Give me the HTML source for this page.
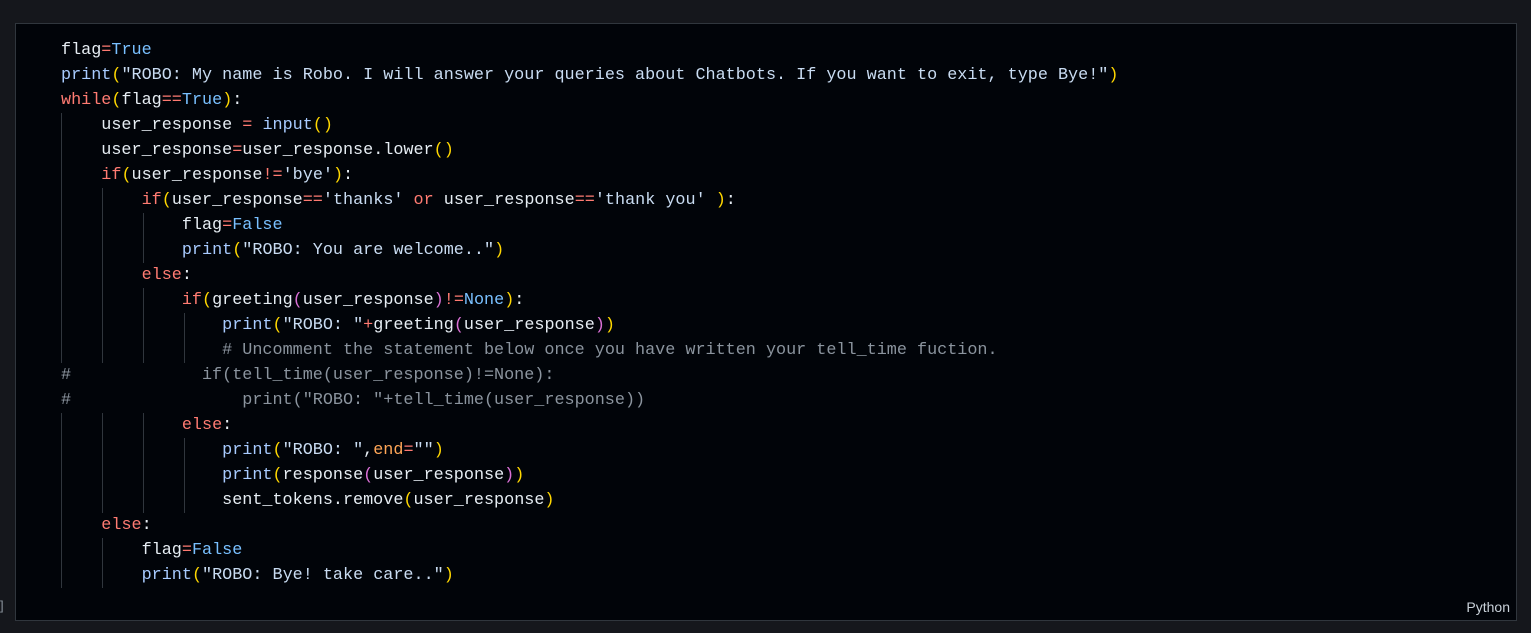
<!DOCTYPE html>
<html><head><meta charset="utf-8"><style>
html,body{margin:0;padding:0;}
body{width:1531px;height:633px;background:#15171c;position:relative;overflow:hidden;font-family:"Liberation Mono",monospace;}
.box{position:absolute;left:15px;top:23px;width:1500px;height:596px;background:#010409;border:1px solid #30363d;}
pre{position:absolute;left:45px;top:14px;margin:0;font-family:"Liberation Mono",monospace;font-size:16.8px;line-height:25px;color:#e6edf3;}
.k{color:#ff7b72}.b{color:#79c0ff}.s{color:#c9dcf2}.c{color:#8b949e}.y{color:#ffd700}.p{color:#da70d6}.o{color:#ffa657}.f{color:#a8cbff}
.g{position:absolute;width:1px;background:#30363d;}
.lang{position:absolute;right:6px;bottom:5px;font-family:"Liberation Sans",sans-serif;font-size:14px;color:#c9d1d9;}
.br{position:absolute;left:0;top:598px;color:#8b949e;font-size:13px;font-family:"Liberation Sans",sans-serif;}
</style></head><body>
<div class="br">]</div>
<div class="box">
<div class="g" style="left:45px;top:89px;height:250px"></div>
<div class="g" style="left:45px;top:389px;height:175px"></div>
<div class="g" style="left:86px;top:164px;height:175px"></div>
<div class="g" style="left:86px;top:389px;height:100px"></div>
<div class="g" style="left:86px;top:514px;height:50px"></div>
<div class="g" style="left:127px;top:189px;height:50px"></div>
<div class="g" style="left:127px;top:264px;height:75px"></div>
<div class="g" style="left:127px;top:389px;height:100px"></div>
<div class="g" style="left:168px;top:289px;height:50px"></div>
<div class="g" style="left:168px;top:414px;height:75px"></div>
<pre>flag<span class="k">=</span><span class="b">True</span>
<span class="f">print</span><span class="y">(</span><span class="s">"ROBO: My name is Robo. I will answer your queries about Chatbots. If you want to exit, type Bye!"</span><span class="y">)</span>
<span class="k">while</span><span class="y">(</span>flag<span class="k">==</span><span class="b">True</span><span class="y">)</span>:
    user_response <span class="k">=</span> <span class="f">input</span><span class="y">()</span>
    user_response<span class="k">=</span>user_response.lower<span class="y">()</span>
    <span class="k">if</span><span class="y">(</span>user_response<span class="k">!=</span><span class="s">'bye'</span><span class="y">)</span>:
        <span class="k">if</span><span class="y">(</span>user_response<span class="k">==</span><span class="s">'thanks'</span> <span class="k">or</span> user_response<span class="k">==</span><span class="s">'thank you'</span> <span class="y">)</span>:
            flag<span class="k">=</span><span class="b">False</span>
            <span class="f">print</span><span class="y">(</span><span class="s">"ROBO: You are welcome.."</span><span class="y">)</span>
        <span class="k">else</span>:
            <span class="k">if</span><span class="y">(</span>greeting<span class="p">(</span>user_response<span class="p">)</span><span class="k">!=</span><span class="b">None</span><span class="y">)</span>:
                <span class="f">print</span><span class="y">(</span><span class="s">"ROBO: "</span><span class="k">+</span>greeting<span class="p">(</span>user_response<span class="p">)</span><span class="y">)</span>
                <span class="c"># Uncomment the statement below once you have written your tell_time fuction.</span>
<span class="c">#             if(tell_time(user_response)!=None):</span>
<span class="c">#                 print("ROBO: "+tell_time(user_response))</span>
            <span class="k">else</span>:
                <span class="f">print</span><span class="y">(</span><span class="s">"ROBO: "</span>,<span class="o">end</span><span class="k">=</span><span class="s">""</span><span class="y">)</span>
                <span class="f">print</span><span class="y">(</span>response<span class="p">(</span>user_response<span class="p">)</span><span class="y">)</span>
                sent_tokens.remove<span class="y">(</span>user_response<span class="y">)</span>
    <span class="k">else</span>:
        flag<span class="k">=</span><span class="b">False</span>
        <span class="f">print</span><span class="y">(</span><span class="s">"ROBO: Bye! take care.."</span><span class="y">)</span></pre>
<div class="lang">Python</div>
</div>
</body></html>
